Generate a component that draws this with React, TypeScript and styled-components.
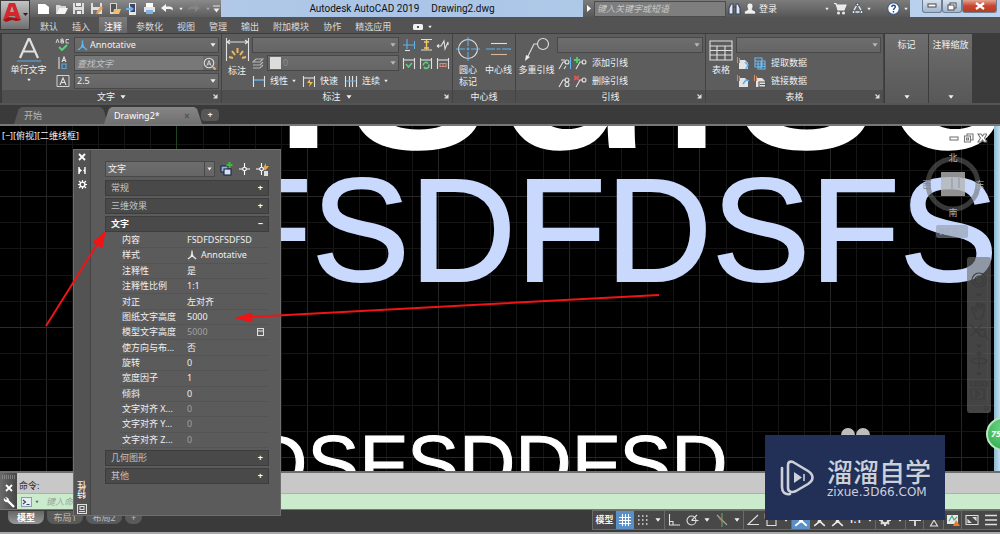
import React from "react";
import styled, { createGlobalStyle, css } from "styled-components";

const GlobalStyle = createGlobalStyle`
  * { box-sizing: border-box; }
  html, body { margin: 0; padding: 0; background: #3a3a3a; }
  body, button, input, select, table {
    font-family: "Noto Sans", "Noto Sans CJK SC", sans-serif;
    font-size: 9px;
    line-height: 12px;
    color: #f0f0f0;
  }
  button { background: none; border: 0; padding: 0; margin: 0; cursor: pointer; }
  svg { display: block; flex: none; }
`;

const Window = styled.div`
  position: relative;
  display: flex;
  flex-direction: column;
  min-height: 100vh;
  overflow: hidden;
`;

/* ---------- title bar ---------- */
const TitleBar = styled.header`
  display: flex;
  height: 17px;
  background: linear-gradient(90deg, #bcd0ea, #a9c4e6 40%, #bcd2ee);
`;
const QuickAccess = styled.div`
  display: flex;
  align-items: center;
  width: 221px;
  padding-left: 35px;
  background: linear-gradient(#8a8a8a, #5c5c5c);
`;
const QuickButton = styled.button<{ $narrow?: boolean }>`
  display: flex;
  justify-content: center;
  width: ${(p) => (p.$narrow ? 9 : 17)}px;
  margin-right: ${(p) => (p.$narrow ? 0 : 1)}px;
`;
const TitleText = styled.h1`
  flex: 1;
  display: flex;
  justify-content: center;
  gap: 12px;
  margin: 0;
  font-family: Roboto, "Noto Sans", sans-serif;
  font-size: 10px;
  font-weight: 400;
  line-height: 18px;
  color: #111;
  white-space: nowrap;
`;
const InfoCenter = styled.div`
  display: flex;
  align-items: center;
  width: 327px;
  background: linear-gradient(#7c7c7c, #575757);
`;
const SearchToggle = styled.button`
  display: flex;
  align-items: center;
  justify-content: center;
  width: 11px;
  height: 17px;
`;
const TitleSearch = styled.input`
  width: 132px;
  height: 16px;
  padding: 0 2px;
  border: 1px solid #4c4c4c;
  background: #7e7e7e;
  font-style: italic;
  &::placeholder { color: #c9c9c9; }
`;
const InfoButton = styled.button<{ $wide?: boolean; $apart?: boolean }>`
  display: flex;
  align-items: center;
  justify-content: center;
  gap: 3px;
  padding: 0 ${(p) => (p.$wide ? 2 : 1)}px;
  margin-left: ${(p) => (p.$apart ? 12 : 0)}px;
`;
const Spacer = styled.div`
  flex: 1;
`;
const WindowButtons = styled.div`
  display: flex;
  width: 90px;
  padding: 0 3px 0 12px;
  align-items: flex-start;
`;
const WindowButton = styled.button<{ $close?: boolean }>`
  display: flex;
  align-items: center;
  justify-content: center;
  flex: ${(p) => (p.$close ? "0 0 35px" : "1")};
  height: 13px;
  border: 1px solid #6d7d92;
  border-top: 0;
  border-radius: 0 0 3px 3px;
  background: ${(p) =>
    p.$close ? "linear-gradient(#e3a492, #c7452e 50%, #b93c22)" : "linear-gradient(#d5e0ee, #a3b7cf)"};
`;

/* ---------- ribbon ---------- */
const AppMenu = styled.button`
  position: absolute;
  left: 0;
  top: 0;
  width: 30px;
  height: 30px;
  border: 1px solid #3c3c3c;
  background: linear-gradient(#c4c4c4, #6e6e6e);
`;
const RibbonTabs = styled.nav`
  display: flex;
  height: 16px;
  padding-left: 33px;
  background: #535353;
`;
const RibbonTab = styled.button<{ $active?: boolean; $apart?: boolean }>`
  padding: 3px 7px 0;
  margin-left: ${(p) => (p.$apart ? 8 : 0)}px;
  white-space: nowrap;
  color: ${(p) => (p.$active ? "#fff" : "#dadada")};
  ${(p) => p.$active && css`
    background: linear-gradient(#7b7b7b, #676767);
    padding: 3px 5px 0;
    margin: 0 2px;
  `}
  display: flex;
  align-items: center;
  gap: 5px;
`;
const Ribbon = styled.section`
  display: flex;
  height: 70px;
  padding-left: 2px;
  border-top: 1px solid #3d3d3d;
  background: #3c3c3c;
`;
const Panel = styled.section<{ $w: number }>`
  display: flex;
  flex-direction: column;
  width: ${(p) => p.$w}px;
  border-right: 1px solid #434343;
  background: #5d5d5d;
`;
const PanelBody = styled.div`
  display: flex;
  flex: 1;
  padding-top: 3px;
`;
const PanelFooter = styled.footer`
  position: relative;
  display: flex;
  justify-content: center;
  align-items: center;
  gap: 5px;
  height: 13px;
  background: #4f4f4f;
`;
const Launcher = styled.button`
  position: absolute;
  right: 3px;
  top: 4px;
`;
const BigButton = styled.button<{ $w: number }>`
  display: flex;
  flex-direction: column;
  align-items: center;
  gap: 2px;
  width: ${(p) => p.$w}px;
  white-space: nowrap;
`;
const PanelRows = styled.div`
  flex: 1;
  display: grid;
  grid-template-rows: repeat(3, 16px);
  row-gap: 2px;
  padding-right: 2px;
`;
const Row = styled.div<{ $gap?: number }>`
  display: flex;
  align-items: center;
  gap: ${(p) => p.$gap ?? 3}px;
  min-width: 0;
`;
const ToolButton = styled.button`
  display: flex;
  align-items: center;
  gap: 4px;
  white-space: nowrap;
`;
const ComboBox = styled.label`
  position: relative;
  display: flex;
  align-items: center;
  flex: 1;
  min-width: 0;
  height: 16px;
  border: 1px solid #484848;
  background: linear-gradient(#6d6d6d, #656565);
`;
const ComboIcon = styled.span`
  padding-left: 2px;
`;
const ComboSelect = styled.select<{ $dim?: boolean }>`
  flex: 1;
  min-width: 0;
  height: 14px;
  padding: 0 2px;
  border: 0;
  background: none;
  appearance: none;
  outline: none;
  color: ${(p) => (p.$dim ? "#8a8a8a" : "#f0f0f0")};
`;
const FindInput = styled.input`
  flex: 1;
  min-width: 0;
  height: 14px;
  padding: 0 2px;
  border: 0;
  background: #787878;
  font-style: italic;
  &::placeholder { color: #c2c2c2; }
`;
const ComboArrow = styled.span<{ $split?: boolean }>`
  display: flex;
  align-items: center;
  padding-right: 2px;
  ${(p) => p.$split && css`
    align-self: stretch;
    padding: 0 2px;
    border-left: 1px solid #484848;
  `}
`;
const CollapsedPanel = styled.button`
  display: flex;
  flex-direction: column;
  align-items: center;
  justify-content: space-between;
  width: 43px;
  margin-left: 1px;
  padding: 5px 0 4px;
  background: linear-gradient(#6e6e6e, #606060 60%, #585858);
  white-space: nowrap;
`;

/* ---------- document tabs ---------- */
const DocTabs = styled.nav`
  display: flex;
  align-items: flex-end;
  height: 23px;
  padding-left: 14px;
  border-top: 2px solid #555;
  border-bottom: 2px solid #777;
  background: #3a3a3a;
`;
const DocTab = styled.button<{ $active?: boolean }>`
  display: flex;
  align-items: center;
  justify-content: space-between;
  width: ${(p) => (p.$active ? 98 : 94)}px;
  height: 17px;
  margin-right: -4px;
  padding: 0 12px 0 10px;
  clip-path: polygon(0 100%, 5% 12%, 8% 0, 92% 0, 95% 12%, 100% 100%);
  background: ${(p) => (p.$active ? "linear-gradient(#858585, #707070)" : "#565656")};
  color: ${(p) => (p.$active ? "#fff" : "#b5b5b5")};
`;
const NewTab = styled.button`
  width: 18px;
  height: 12px;
  margin: 0 0 3px 3px;
  border-radius: 4px;
  background: #575757;
  line-height: 10px;
  font-weight: 700;
`;

/* ---------- drawing area ---------- */
const Canvas = styled.main`
  position: relative;
  flex: 1;
  min-height: 345px;
  overflow: hidden;
  background: #000;
`;
const Drawing = styled.svg`
  position: absolute;
  inset: 0;
  width: 100%;
  height: 100%;
`;
const DrawingText = styled.text`
  font-family: "Liberation Sans", Arial, sans-serif;
`;
const ViewLabel = styled.div`
  position: absolute;
  left: 2px;
  top: 4px;
`;
const RightEdge = styled.div`
  position: absolute;
  right: 0;
  top: 0;
  bottom: 0;
  width: 6px;
  background: linear-gradient(90deg, #8fb9cf, #bfe2f5);
`;
const DocButtons = styled.div`
  position: absolute;
  right: 13px;
  top: 7px;
`;
const ViewCube = styled.div`
  position: absolute;
  right: 15px;
  top: 24px;
`;
const NavBar = styled.div`
  position: absolute;
  right: 9px;
  top: 131px;
  display: flex;
  flex-direction: column;
  width: 24px;
  height: 156px;
  border-radius: 3px;
  background: rgba(110, 110, 110, 0.62);
`;

/* ---------- properties palette ---------- */
const Palette = styled.aside`
  position: absolute;
  left: 73px;
  top: 149px;
  display: flex;
  width: 208px;
  height: 367px;
  border: 1px solid #6e6e6e;
  background: #5b5b5b;
`;
const PaletteStrip = styled.div`
  display: flex;
  flex-direction: column;
  align-items: center;
  gap: 5px;
  width: 17px;
  padding: 3px 0 1px;
  border-right: 1px solid #444;
  background: #535353;
`;
const PaletteTitle = styled.h2`
  margin: 0;
  writing-mode: vertical-rl;
  transform: rotate(180deg);
  font-size: 9px;
  font-weight: 500;
  line-height: 12px;
`;
const PaletteBody = styled.div`
  flex: 1;
  padding: 10px 11px 0 14px;
`;
const PaletteTop = styled.div`
  display: flex;
  align-items: center;
  gap: 5px;
  height: 17px;
  margin-bottom: 3px;
`;
const SectionHead = styled.button<{ $open?: boolean }>`
  display: flex;
  align-items: center;
  justify-content: space-between;
  width: 100%;
  height: 16px;
  margin-bottom: ${(p) => (p.$open ? 0 : 2)}px;
  padding: 0 5px;
  border: 1px solid #3d3d3d;
  background: #494949;
  color: ${(p) => (p.$open ? "#fff" : "#c4c4c4")};
  font-weight: ${(p) => (p.$open ? 700 : 400)};
`;
const Sign = styled.span`
  color: #fff;
  font-weight: 700;
`;
const PropTable = styled.table`
  width: 149px;
  height: 215px;
  margin: 1px 0 2px 15px;
  border-collapse: collapse;
  table-layout: fixed;
`;
const PropName = styled.th`
  width: 65px;
  padding: 0 0 0 2px;
  border-bottom: 1px solid #545454;
  text-align: left;
  font-weight: 400;
  white-space: nowrap;
`;
const PropValue = styled.td<{ $dim?: boolean }>`
  padding: 0 5px 0 2px;
  border-bottom: 1px solid #545454;
  color: ${(p) => (p.$dim ? "#a0a0a0" : "#f0f0f0")};
  white-space: nowrap;
`;
const ValueLine = styled.span`
  display: flex;
  align-items: center;
  gap: 4px;
  & > svg:last-child:not(:first-child) { margin-left: auto; }
`;

/* ---------- command line ---------- */
const CommandBar = styled.section`
  display: flex;
  height: 39px;
  border-top: 2px solid #6d6d6d;
  border-bottom: 1px solid #777;
`;
const CommandHandle = styled.div`
  display: flex;
  flex-direction: column;
  align-items: center;
  justify-content: space-between;
  width: 17px;
  padding: 2px 0 1px;
  background: linear-gradient(90deg, #6a6a6a, #454545);
`;
const CommandLines = styled.div`
  flex: 1;
  display: flex;
  flex-direction: column;
`;
const CommandHistory = styled.div`
  height: 21px;
  padding: 7px 2px 0;
  border-bottom: 1px solid #a8b5a9;
  background: #c8c8c8;
  color: #222;
`;
const CommandPrompt = styled.label`
  display: flex;
  align-items: center;
  gap: 3px;
  flex: 1;
  padding-left: 4px;
  background: #cbebcd;
`;
const CommandInput = styled.input`
  flex: 1;
  border: 0;
  padding: 0 4px;
  background: none;
  outline: none;
  font-style: italic;
  color: #333;
  &::placeholder { color: #96a898; }
`;

/* ---------- status bar ---------- */
const StatusBar = styled.footer`
  display: flex;
  justify-content: space-between;
  height: 24px;
  border-bottom: 2px solid #a9a9ad;
  background: #3a3a3a;
`;
const LayoutTabs = styled.div`
  display: flex;
  align-items: flex-start;
  gap: 3px;
  padding: 1px 0 0 8px;
`;
const LayoutTab = styled.button<{ $active?: boolean; $small?: boolean }>`
  width: ${(p) => (p.$small ? 17 : 36)}px;
  height: 13px;
  border-radius: 0 0 7px 7px;
  background: ${(p) => (p.$active ? "linear-gradient(#666, #999)" : "#5a5a5a")};
  color: ${(p) => (p.$active ? "#fff" : "#bdbdbd")};
  font-weight: ${(p) => (p.$active ? 700 : 400)};
`;
const StatusTools = styled.div`
  display: flex;
  height: 20px;
  border: 1px solid #6a6a6a;
  border-right: 0;
  background: #484848;
`;
const StatusButton = styled.button<{ $w?: number; $on?: boolean; $sep?: boolean }>`
  display: flex;
  align-items: center;
  justify-content: center;
  width: ${(p) => p.$w ?? 18}px;
  font-weight: 700;
  background: ${(p) => (p.$on ? "#5b8fc7" : "none")};
  border-right: ${(p) => (p.$sep ? "1px solid #6a6a6a" : "0")};
`;

/* ---------- overlays ---------- */
const Arrows = styled.svg`
  position: absolute;
  left: 0;
  top: 0;
  pointer-events: none;
`;
const Watermark = styled.div`
  position: absolute;
  right: 55px;
  bottom: 14px;
  display: flex;
  align-items: center;
  gap: 12px;
  width: 180px;
  height: 85px;
  padding-left: 14px;
  background: #222f57;
  color: #ccd0d8;
`;
const BrandName = styled.div`
  font-size: 26px;
  font-weight: 500;
  line-height: 28px;
`;
const BrandUrl = styled.div`
  font-family: "DejaVu Sans", sans-serif;
  font-size: 12px;
  line-height: 12px;
`;
const Ball = styled.div`
  position: absolute;
  right: -20px;
  bottom: 83px;
  width: 34px;
  height: 34px;
  padding-left: 3px;
  border: 2px solid #b8e6c0;
  border-radius: 50%;
  background: radial-gradient(circle at 50% 30%, #6fd684, #2ba84a);
  color: #fff;
  font-size: 9px;
  font-style: italic;
  font-weight: 700;
  line-height: 30px;
`;

type IconProps = { w?: number; h?: number; box?: string; children: React.ReactNode };
const Icon = ({ w = 14, h = 14, box, children }: IconProps) => (
  <svg width={w} height={h} viewBox={box ?? `0 0 ${w} ${h}`} fill="none" stroke="#e0e0e0" strokeWidth="1.1" aria-hidden="true">
    {children}
  </svg>
);
const Caret = ({ c = "#f0f0f0", w = 7 }: { c?: string; w?: number }) => (
  <svg width={w} height="4" viewBox="0 0 7 4" aria-hidden="true"><path d="M0.5 0h6L3.5 4z" fill={c} /></svg>
);
const Corner = () => (
  <Launcher aria-label="对话框启动器">
    <Icon w={5} h={5}><path d="M0.500 0.500l2 2" /><path d="M4.500 0v4.500H0z" fill="#e0e0e0" stroke="none" /></Icon>
  </Launcher>
);
const Person = ({ c = "#e8e8e8", s = 11 }: { c?: string; s?: number }) => (
  <Icon w={s} h={s} box="0 0 11 11"><path d="M5.500 0.500v6L1 10M5.500 6l4.500 4" stroke={c} strokeWidth="1.400" /><path d="M5.500 2L3.500 7.500h4z" fill={c} stroke="none" /></Icon>
);

type ComboProps = { label: string; value?: string; icon?: React.ReactNode; dim?: boolean; split?: boolean };
const Combo = ({ label, value, icon, dim, split }: ComboProps) => (
  <ComboBox>
    {icon && <ComboIcon>{icon}</ComboIcon>}
    <ComboSelect aria-label={label} $dim={dim}>
      <option>{value ?? ""}</option>
    </ComboSelect>
    <ComboArrow $split={split}><Caret c={dim || !value ? "#b8b8b8" : "#f0f0f0"} w={split ? 5 : 6} /></ComboArrow>
  </ComboBox>
);

const quickIcons: [string, React.ReactNode][] = [
  ["新建", <path key="a" d="M1 2h7l4 3v7H1z" fill="#fff" stroke="none" />],
  ["打开", <g key="a" stroke="none"><path d="M1 3h4l1 1h5v2H4l-3 6z" fill="#d8d8d8" /><path d="M4 6h9l-3 6H1z" fill="#f4f4f4" /></g>],
  ["保存", <g key="a" stroke="none"><path d="M1 1h11v11H1z" fill="#dedede" /><path d="M3 1h7v4H3zM3 8h7v4H3z" fill="#777" /><path d="M4 1h5v3H4zM5 9h4v3H5z" fill="#eee" /></g>],
  ["另存为", <g key="a" stroke="none"><path d="M1 1h11v11H1z" fill="#dedede" /><path d="M3 1h7v4H3zM3 8h5v4H3z" fill="#777" /><path d="M6 12l1-3 4-5 2 2-4 5z" fill="#e8a15a" /></g>],
  ["从移动设备打开", <g key="a" stroke="none"><path d="M2 1h7v11H2z" fill="#d6d6d6" /><path d="M3 2h5v8H3z" fill="#555" /><path d="M6 7h7l-2 5H5z" fill="#f0c070" /></g>],
  ["保存到移动设备", <g key="a" stroke="none"><path d="M4 1h7v12H4z" fill="#e6e6e6" /><path d="M5 2h5v8H5z" fill="#446" /><path d="M1 6h4V4l4 3-4 3V8H1z" fill="#6ab4ee" /></g>],
  ["打印", <g key="a" stroke="none"><path d="M3 1h7v4H3z" fill="#fff" /><path d="M1 5h11v5H1z" fill="#e4e4e4" /><path d="M3 8h7v4H3z" fill="#7fb2e0" /></g>],
  ["放弃", <path key="a" d="M0 6l5-4v2.500h3c3 0 4 1.500 4 4-1-1-2-1.500-4-1.500H5v3z" fill="#f4f4f4" stroke="none" />],
];

const ribbonTabs = ["默认", "插入", "注释", "参数化", "视图", "管理", "输出", "附加模块", "协作", "精选应用"];

const properties: [string, string, string?][] = [
  ["内容", "FSDFDSFSDFSD"],
  ["样式", "Annotative", "style"],
  ["注释性", "是"],
  ["注释性比例", "1:1"],
  ["对正", "左对齐"],
  ["图纸文字高度", "5000"],
  ["模型文字高度", "5000", "calc"],
  ["使方向与布...", "否"],
  ["旋转", "0"],
  ["宽度因子", "1"],
  ["倾斜", "0"],
  ["文字对齐 X...", "0", "dim"],
  ["文字对齐 Y...", "0", "dim"],
  ["文字对齐 Z...", "0", "dim"],
];

const gridX = Array.from({ length: 100 }, (_, i) => Math.round(19.5 + 26.15 * i));
const gridY = Array.from({ length: 60 }, (_, i) => Math.round(18 + 26.1 * i));

const DimIcon = () => (
  <Icon w={25} h={26}>
    <path d="M1.500 1v23M23.500 1v23M2 5h21M5 3L2 5l3 2M20 3l3 2-3 2" />
    <g stroke="#f0b75c" strokeWidth="2"><path d="M12.500 11v5M7 14l3 4M18 14l-3 4M4 20l4 1M21 20l-4 1" /></g>
  </Icon>
);
const SmallDim = ({ kind }: { kind: string }) => (
  <Icon w={14} h={13}>
    <path d="M1.500 1v11M12.500 1v11" />
    {kind === "linear" && <path d="M2 5h10" stroke="#5fb1ea" strokeWidth="1.500" />}
    {kind === "quick" && <><path d="M2 3h10" /><path d="M8 4L5 8h3l-1 4 4-5H8z" fill="#f2c14e" stroke="none" /></>}
    {kind === "cont" && <><path d="M5.500 1v11M8.500 1v11" /><path d="M2 6h10" stroke="#5fb1ea" /></>}
    {kind === "ok" && <><path d="M2 3h10" /><path d="M4 7l2.500 3L10 6" stroke="#5ccf7a" strokeWidth="1.500" /></>}
    {kind === "sync" && <><path d="M2 3h10" /><path d="M4.500 8.500a2.500 2.500 0 014.500-2M9.500 7.500a2.500 2.500 0 01-4.500 2.500" stroke="#5ccf7a" strokeWidth="1.600" /></>}
    {kind === "tol" && <><path d="M2 3h10" /><path d="M4 6.500h6v3H4zM7 6.500v3" stroke="#d88a7a" /></>}
  </Icon>
);
const LeaderIcon = ({ kind }: { kind: string }) => (
  <Icon w={14} h={13}>
    <path d="M2 12l4-7h3" /><circle cx="10" cy="5" r="2" />
    {kind === "align" && <><path d="M13.500 0v12" stroke="#5fb1ea" /><path d="M4 3h4M7 12l2-3" /></>}
    {kind === "collect" && <circle cx="10" cy="9.500" r="2" />}
    {kind === "add" && <path d="M3 0v6M0 3h6" stroke="#4ed06c" strokeWidth="1.800" />}
    {kind === "del" && <path d="M0 1l5 4M5 1L0 5" stroke="#e0584c" strokeWidth="1.800" />}
  </Icon>
);
const DataIcon = ({ kind }: { kind: string }) => (
  <Icon w={14} h={13}>
    {kind === "extract" ? (
      <path d="M2 1h7v9H2zM5 4h7v8H5zM5 7h7M5 9.500h7M8 4v8M2 4h3M2 7h3" stroke="#6fb8ea" />
    ) : (
      <><path d="M3 3h6l3 3v6H3z" fill="#e4e4e4" stroke="none" /><path d="M1.500 0v6M3.500 1v5" stroke="#d08a64" />
        {kind === "down" && <path d="M9 5l3 3-2 4" stroke="#5fb1ea" strokeWidth="1.600" />}
        {kind === "up" && <path d="M7 9l3-4 3 1" stroke="#5fb1ea" strokeWidth="1.600" />}
        {kind === "link" && <path d="M6 7h7v5H6zM7 9.500h5" stroke="#555" />}</>
    )}
  </Icon>
);

const StatusIcons = () => (
  <StatusTools>
    <StatusButton $w={23}>模型</StatusButton>
    <StatusButton $on aria-label="栅格"><Icon><path d="M4.500 1v12M7.500 1v12M10.500 1v12M1 4.500h12M1 7.500h12M1 10.500h12" stroke="#fff" /></Icon></StatusButton>
    <StatusButton aria-label="捕捉"><Icon><path d="M2 3h10M2 7h10M2 11h10" strokeDasharray="1.500 2.500" strokeWidth="1.500" /></Icon></StatusButton>
    <StatusButton $w={13} $sep aria-label="捕捉选项"><Caret w={6} /></StatusButton>
    <StatusButton aria-label="正交"><Icon><path d="M2.500 1v11H13M2.500 8.500h3.500V12" /></Icon></StatusButton>
    <StatusButton aria-label="极轴"><Icon><circle cx="6.500" cy="7.500" r="4.500" /><path d="M6.500 7.500h7M6.500 7.500L12 2" /></Icon></StatusButton>
    <StatusButton $w={12} aria-label="极轴选项"><Caret w={6} /></StatusButton>
    <StatusButton aria-label="等轴测"><Icon><path d="M2 2l10 10" stroke="#aaa" /><path d="M7 0v14" stroke="#5aae5a" /><path d="M4 5l4 4" stroke="#c86a5a" /></Icon></StatusButton>
    <StatusButton $w={13} $sep aria-label="等轴测选项"><Caret w={6} /></StatusButton>
    <StatusButton aria-label="对象捕捉追踪"><Icon><path d="M12 2L2 11.500h11" /></Icon></StatusButton>
    <StatusButton aria-label="二维对象捕捉"><Icon><path d="M3 3.500h9v9H3z" /><path d="M1 1h4v4H1z" stroke="#dd8a70" /></Icon></StatusButton>
    <StatusButton $w={12} $sep aria-label="捕捉设置"><Caret w={6} /></StatusButton>
    <StatusButton $on aria-label="注释可见性"><Person c="#fff" s={14} /></StatusButton>
    <StatusButton aria-label="自动缩放"><Person s={13} /></StatusButton>
    <StatusButton aria-label="注释比例"><Person s={13} /></StatusButton>
    <StatusButton>1:1</StatusButton>
    <StatusButton $w={12} $sep aria-label="比例选项"><Caret w={6} /></StatusButton>
    <StatusButton aria-label="切换工作空间"><Icon><circle cx="7" cy="7" r="3.500" strokeWidth="2.400" /><path d="M7 1v2M7 11v2M1 7h2M11 7h2M3 3l1 1M10 10l1 1M11 3l-1 1M4 10l-1 1" strokeWidth="2" /></Icon></StatusButton>
    <StatusButton $w={12} $sep aria-label="工作空间选项"><Caret w={6} /></StatusButton>
    <StatusButton $sep aria-label="注释监视器"><Icon><path d="M7 1v12M1 7h12" strokeWidth="1.800" /></Icon></StatusButton>
    <StatusButton $w={20} $sep aria-label="隔离对象"><Icon><path d="M7 7l3.500 6h-7z" /><circle cx="11" cy="4" r="2" /><path d="M2 3h4v3H2z" /></Icon></StatusButton>
    <StatusButton $sep aria-label="硬件加速"><Icon><path d="M1 2h11v9H1z" fill="#e8e8e8" stroke="none" /><path d="M3 8l3-5 2 4 3-3" stroke="#4a7" /><path d="M7 13l3-6 4 6z" fill="#ee7a2a" stroke="none" /></Icon></StatusButton>
    <StatusButton $w={20} aria-label="全屏显示"><Icon><path d="M1 2.500h12v9H1zM3 9.500V7l2.500 2.500zM8.500 4.500H11V7z" /></Icon></StatusButton>
    <StatusButton aria-label="自定义"><Icon><path d="M1 2.500h12M1 7h12M1 11.500h12" strokeWidth="1.600" /></Icon></StatusButton>
  </StatusTools>
);

export default function App() {
  return (
    <Window>
      <GlobalStyle />
      <TitleBar>
        <QuickAccess>
          {quickIcons.map(([name, art]) => (
            <QuickButton key={name} aria-label={name}><Icon w={13} h={13}>{art}</Icon></QuickButton>
          ))}
          <QuickButton $narrow aria-label="放弃列表"><Caret w={4} /></QuickButton>
          <QuickButton aria-label="重做"><Icon w={13} h={13}><path d="M13 6L8 2v2.500H5c-3 0-4 1.500-4 4 1-1 2-1.500 4-1.500h3v3z" fill="#858585" stroke="none" /></Icon></QuickButton>
          <QuickButton $narrow aria-label="重做列表"><Caret w={4} c="#aaa" /></QuickButton>
          <QuickButton $narrow aria-label="自定义快速访问工具栏"><Icon w={7} h={8}><path d="M0 1h7" /><path d="M0.500 3.500h6l-3 4z" fill="#eee" stroke="none" /></Icon></QuickButton>
        </QuickAccess>
        <TitleText><span>Autodesk AutoCAD 2019</span><span>Drawing2.dwg</span></TitleText>
        <InfoCenter>
          <SearchToggle aria-label="展开搜索"><Icon w={4} h={7}><path d="M0 0l4 3.500L0 7z" fill="#fff" stroke="none" /></Icon></SearchToggle>
          <TitleSearch aria-label="搜索" placeholder="键入关键字或短语" />
          <InfoButton $wide aria-label="查找"><Icon w={13} h={13}><path d="M1 12V6l2-4h2v10zM12 12V6l-2-4H8v10zM5 5h3" fill="#e6e6e6" stroke="#33466a" /></Icon></InfoButton>
          <InfoButton><Icon w={12} h={13}><path d="M6 1a3 3 0 013 3c0 1.500-.8 2.500-1 3.500l3.500 2V12h-11V9.500l3.500-2C3.800 6.500 3 5.500 3 4a3 3 0 013-3z" fill="#f0f0f0" stroke="#555" strokeWidth="0.600" /></Icon>登录</InfoButton>
          <Spacer />
          <InfoButton $wide aria-label="登录选项"><Caret w={4} /></InfoButton>
          <InfoButton $wide $apart={false} aria-label="应用商店"><Icon w={14} h={13}><path d="M1 1.500h2l2 6.500h6l2-5H4" fill="#e8e8e8" stroke="#f0f0f0" /><circle cx="5.500" cy="11" r="1" fill="#fff" /><circle cx="10.500" cy="11" r="1" fill="#fff" /></Icon></InfoButton>
          <InfoButton $wide aria-label="保持连接"><Icon w={13} h={13}><path d="M6.500 2L11 10H2z" stroke="#e8e8f4" strokeWidth="1.400" /><g fill="#fff" stroke="#456"><circle cx="6.500" cy="2.500" r="1.500" /><circle cx="2.500" cy="10" r="1.500" /><circle cx="10.500" cy="10" r="1.500" /></g></Icon><Caret w={4} /></InfoButton>
          <InfoButton $wide $apart aria-label="帮助"><Icon w={13} h={13}><circle cx="6.500" cy="6.500" r="5.800" fill="#fff" stroke="#345a9a" /><path d="M4.800 5c0-2.500 3.600-2.300 3.500-.2C8.300 6.200 6.500 6.200 6.500 8M6.500 9v1.500" stroke="#23457f" strokeWidth="1.400" /></Icon></InfoButton>
          <InfoButton $wide aria-label="帮助选项"><Caret w={4} /></InfoButton>
        </InfoCenter>
        <WindowButtons>
          <WindowButton aria-label="最小化"><Icon w={10} h={6}><rect x="1" y="1" width="8" height="3" fill="#fff" stroke="#555" /></Icon></WindowButton>
          <WindowButton aria-label="还原"><Icon w={10} h={9}><rect x="3" y="1" width="6" height="5" fill="#fff" stroke="#555" /><rect x="1" y="3" width="6" height="5" fill="#fff" stroke="#555" /></Icon></WindowButton>
          <WindowButton $close aria-label="关闭"><Icon w={10} h={8}><path d="M1 1l8 6M9 1L1 7" stroke="#fff" strokeWidth="2.200" /></Icon></WindowButton>
        </WindowButtons>
      </TitleBar>

      <RibbonTabs>
        {ribbonTabs.map((t) => <RibbonTab key={t} $active={t === "注释"}>{t}</RibbonTab>)}
        <RibbonTab $apart aria-label="功能区选项">
          <Icon w={10} h={6}><rect width="10" height="6" rx="1.500" fill="#f0f0f0" stroke="none" /><rect x="4" y="2" width="2" height="2" fill="#555" stroke="none" /></Icon>
          <Caret w={4} />
        </RibbonTab>
      </RibbonTabs>
      <AppMenu aria-label="应用程序菜单">
        <Icon w={28} h={28}>
          <path d="M2 19L8 2h6l6 17-5 1-1-5H8l-1 3z" fill="#d4262d" stroke="none" />
          <path d="M9 11l2-6 2 6z" fill="#a9a9a9" stroke="none" />
          <path d="M2 19l6-3 7 1 5 2-5 1-4-1-6 2z" fill="#a31218" stroke="none" />
          <path d="M22 12h5l-2.500 3z" fill="#222" stroke="none" />
        </Icon>
      </AppMenu>

      <Ribbon>
        <Panel $w={220}>
          <PanelBody>
            <BigButton $w={53}>
              <Icon w={24} h={25}><path d="M3 21L11.500 2h1L21 21M6 14.500h12" strokeWidth="2.200" /><path d="M0 24h24" stroke="#5fa5dc" /></Icon>
              <span>单行文字</span><Caret w={4} />
            </BigButton>
            <PanelRows>
              <Row>
                <ToolButton aria-label="拼写检查"><Icon w={16}><path d="M1 5l1.500-4L4 5M6 1v4h2.500V3H6h2V1zM14 1.500h-3V5h3" strokeWidth="0.900" /><path d="M4 9l3 3 5-5" stroke="#5fd37c" strokeWidth="1.800" /></Icon></ToolButton>
                <Combo label="文字样式" value="Annotative" icon={<Person c="#5db4f0" />} />
              </Row>
              <Row>
                <ToolButton aria-label="文字对齐"><Icon w={16}><path d="M4 1v12" /><path d="M7 6l2-5 2 5M7.500 4.500h3" /><path d="M7 8h4v4.500H7z" stroke="#5fa5dc" /></Icon></ToolButton>
                <ComboBox>
                  <FindInput aria-label="查找文字" placeholder="查找文字" />
                  <ComboArrow><Icon w={13} h={13}><circle cx="6" cy="6" r="4.800" /><path d="M4 8.500l2-5 2 5M5 7h2" strokeWidth="0.900" /><path d="M10 10l2.500 2.500" stroke="#e6b45e" strokeWidth="2" /></Icon></ComboArrow>
                </ComboBox>
              </Row>
              <Row>
                <ToolButton aria-label="文字高度"><Icon w={16}><path d="M2 1.500h12v11H2z" strokeWidth="0.900" /><path d="M5 11l3-7 3 7M6 8.500h4" /></Icon></ToolButton>
                <Combo label="文字高度" value="2.5" />
              </Row>
            </PanelRows>
          </PanelBody>
          <PanelFooter><span>文字</span><Caret w={6} /><Corner /></PanelFooter>
        </Panel>

        <Panel $w={231}>
          <PanelBody>
            <BigButton $w={30}><DimIcon /><span>标注</span></BigButton>
            <PanelRows>
              <Row>
                <Combo label="标注样式" />
                <ToolButton aria-label="打断"><Icon><path d="M1 7h12M5 1v10M12.500 3v8" stroke="#5fb1ea" /><path d="M3 12.500h5" /></Icon></ToolButton>
                <ToolButton aria-label="调整间距"><Icon><path d="M2 1.500h11M2 12h11" /><path d="M7.500 2v9.500M5 4h5M5 10h5" stroke="#f0c86a" strokeWidth="1.400" /></Icon></ToolButton>
                <ToolButton aria-label="折弯"><Icon><path d="M1 8h4l3-5 1 8 3-7v3M1 8l2-1.500M1 8l2 1.500" /></Icon></ToolButton>
              </Row>
              <Row>
                <Icon w={12} h={13}><path d="M1 5l3-3h7L8 5zM1 8l2 0M8 8l3-3M1 8h7M1 11h7l3-3" stroke="#b8b8b8" /></Icon>
                <Combo label="标注图层" value="0" dim icon={<Icon w={11} h={12}><rect width="11" height="12" fill="#dcdcdc" stroke="none" /></Icon>} />
                <ToolButton aria-label="检验"><SmallDim kind="ok" /></ToolButton>
                <ToolButton aria-label="更新"><SmallDim kind="sync" /></ToolButton>
                <ToolButton aria-label="公差"><SmallDim kind="tol" /></ToolButton>
              </Row>
              <Row $gap={6}>
                <ToolButton><SmallDim kind="linear" />线性<Caret w={4} /></ToolButton>
                <ToolButton><SmallDim kind="quick" />快速</ToolButton>
                <ToolButton><SmallDim kind="cont" />连续<Caret w={4} /></ToolButton>
              </Row>
            </PanelRows>
          </PanelBody>
          <PanelFooter><span>标注</span><Caret w={6} /><Corner /></PanelFooter>
        </Panel>

        <Panel $w={63}>
          <PanelBody>
            <BigButton $w={30}>
              <Icon w={24} h={25}><circle cx="12" cy="12" r="9.500" /><path d="M12 0v24M0 12h24" stroke="#5fb1ea" strokeDasharray="9 1.500 3 1.500" /></Icon>
              <span>圆心<br />标记</span>
            </BigButton>
            <BigButton $w={31}>
              <Icon w={26} h={25}><path d="M5 6.500h16" /><path d="M0 12h26" stroke="#5fb1ea" strokeDasharray="9 1.500 4 1.500" /><path d="M5 17.500h16" stroke="#d6b79a" /></Icon>
              <span>中心线</span>
            </BigButton>
          </PanelBody>
          <PanelFooter>中心线</PanelFooter>
        </Panel>

        <Panel $w={190}>
          <PanelBody>
            <BigButton $w={41}>
              <Icon w={26} h={25}><circle cx="19" cy="7" r="5.500" /><path d="M13.500 7H10L3 21" /><path d="M1 24l1-6 4 2z" fill="#eee" stroke="none" /></Icon>
              <span>多重引线</span>
            </BigButton>
            <PanelRows>
              <Row><Combo label="多重引线样式" /></Row>
              <Row>
                <ToolButton aria-label="对齐"><LeaderIcon kind="align" /></ToolButton>
                <ToolButton><LeaderIcon kind="add" />添加引线</ToolButton>
              </Row>
              <Row>
                <ToolButton aria-label="合并"><LeaderIcon kind="collect" /></ToolButton>
                <ToolButton><LeaderIcon kind="del" />删除引线</ToolButton>
              </Row>
            </PanelRows>
          </PanelBody>
          <PanelFooter>引线<Corner /></PanelFooter>
        </Panel>

        <Panel $w={178}>
          <PanelBody>
            <BigButton $w={30}>
              <Icon w={24} h={25}><path d="M1 4h22v19H1zM1 9h22M1 13.500h22M1 18h22M8 9v14M16 9v14" /></Icon>
              <span>表格</span>
            </BigButton>
            <PanelRows>
              <Row><Combo label="表格样式" /></Row>
              <Row>
                <ToolButton aria-label="从源下载"><DataIcon kind="down" /></ToolButton>
                <ToolButton><DataIcon kind="extract" />提取数据</ToolButton>
              </Row>
              <Row>
                <ToolButton aria-label="上载到源"><DataIcon kind="up" /></ToolButton>
                <ToolButton><DataIcon kind="link" />链接数据</ToolButton>
              </Row>
            </PanelRows>
          </PanelBody>
          <PanelFooter>表格<Corner /></PanelFooter>
        </Panel>
        <CollapsedPanel>标记<Caret w={6} /></CollapsedPanel>
        <CollapsedPanel>注释缩放<Caret w={6} /></CollapsedPanel>
      </Ribbon>

      <DocTabs>
        <DocTab>开始</DocTab>
        <DocTab $active><span>Drawing2*</span><Icon w={6} h={6}><path d="M1 1l4 4M5 1L1 5" stroke="#555" /></Icon></DocTab>
        <NewTab aria-label="新图形">+</NewTab>
      </DocTabs>

      <Canvas>
        <Drawing aria-hidden="true">
          <g shapeRendering="crispEdges" strokeWidth="1">
            {gridX.map((x, i) => <line key={x} x1={x + 0.5} x2={x + 0.5} y1="0" y2="100%" stroke={i % 5 === 1 ? "#262626" : "#151515"} />)}
            {gridY.map((y, i) => <line key={y} x1="0" x2="100%" y1={y + 0.5} y2={y + 0.5} stroke={i % 5 === 2 ? "#262626" : "#151515"} />)}
            <line x1="0" x2="100%" y1="201.500" y2="201.500" stroke="#4d1f1c" />
            <line x1="176.500" x2="176.500" y1="0" y2="201" stroke="#1d451f" />
          </g>
          <DrawingText x="265" y="21" fontSize="291" fill="#fff" stroke="#fff" strokeWidth="2">fsdfsdfsd</DrawingText>
          <DrawingText x="222" y="155" fontSize="147" fill="#c8d9fd" stroke="#c8d9fd" strokeWidth="2">FSDFDSFS</DrawingText>
          <DrawingText x="251" y="364" fontSize="78" fill="#fff" stroke="#fff" strokeWidth="1">DSFSDDFSD</DrawingText>
          <g fill="#bdbdbd"><circle cx="848" cy="309" r="7" /><circle cx="863" cy="309" r="7" /></g>
        </Drawing>
        <ViewLabel>[−][俯视][二维线框]</ViewLabel>
        <RightEdge />
        <DocButtons>
          <Icon w={38} h={10}>
            <g stroke="#777" fill="#fff"><rect x="1" y="4" width="8" height="3" /><path d="M18 1h6v6h-6z" /><path d="M15.500 3h6v6h-6zM17.500 5h2v2h-2z" /><path d="M29 1h3l1.500 2L35 1h3l-2.500 4L38 9h-3l-1.500-2L32 9h-3l2.500-4z" /></g>
          </Icon>
        </DocButtons>
        <ViewCube>
          <svg width="64" height="88" viewBox="0 0 64 88" fontSize="9" textAnchor="middle">
            <circle cx="32" cy="34" r="25" fill="none" stroke="#666" strokeOpacity="0.550" strokeWidth="5" />
            <rect x="20" y="22" width="24" height="24" fill="#b4b4b4" fillOpacity="0.800" />
            <path d="M31 28v11M38 28v10" stroke="#8a95a5" fill="none" />
            <rect x="15" y="75" width="32" height="13" rx="2" fill="#8d94a2" fillOpacity="0.550" />
            <g fill="#b0b0b0"><text x="32" y="11">北</text><text x="59" y="38">东</text><text x="32" y="66">南</text><text x="6" y="38" fill="#888">西</text></g>
            <text x="27" y="85" fill="#a3adc0">WCS</text>
          </svg>
        </ViewCube>
        <NavBar>
          <Icon w={24} h={156}>
            <g stroke="#3c3c3c" strokeWidth="1.200">
              <circle cx="12" cy="23" r="7" /><circle cx="12" cy="23" r="4" /><path d="M10 37h4l-2 2z" fill="#333" />
              <path d="M7 56l-3-5 2-1 3 4V48l1-2 2 6V46h2v6l2-5 1 1v8l-3 6H9z" />
              <path d="M3 67l12 13M15 67L4 79" /><circle cx="15" cy="76" r="3.500" /><path d="M18 79l3 3" />
              <path d="M10 88h4l-2 2z" fill="#333" />
              <path d="M12 95v17M9 98l3-3 3 3M4 104c3-4 13-4 16 0-3 4-13 4-16 0" /><path d="M10 116h4l-2 2z" fill="#333" />
              <path d="M4 125h4v4H4zM10 125h4v4h-4zM16 125h4v4h-4zM4 132h13v10H4zM9 134v6l4-3z" /><circle cx="19" cy="151" r="2" />
            </g>
          </Icon>
        </NavBar>
      </Canvas>

      <CommandBar>
        <CommandHandle>
          <Icon w={13} h={4}><path d="M0 1h13M0 3h13" strokeDasharray="1 1" stroke="#aaa" /></Icon>
          <Icon w={8} h={8}><path d="M1 1l6 6M7 1L1 7" stroke="#fff" strokeWidth="1.800" /></Icon>
          <Icon w={12} h={12}><path d="M5 5l6 6" stroke="#fff" strokeWidth="2.400" /><path d="M2 1l2 2-1 1-2-2C0 4 2 7 5 6c2-1 1-5-3-5z" fill="#fff" stroke="none" /></Icon>
        </CommandHandle>
        <CommandLines>
          <CommandHistory>命令:</CommandHistory>
          <CommandPrompt>
            <Icon w={11} h={10}><rect x="0.500" y="0.500" width="10" height="9" fill="#e8eef6" stroke="#8b9bb5" /><path d="M2 3l2.500 2L2 7M5.500 7.500h3" stroke="#345" /></Icon>
            <Caret w={4} c="#667" />
            <CommandInput aria-label="命令行" placeholder="键入命令" />
          </CommandPrompt>
        </CommandLines>
      </CommandBar>

      <StatusBar>
        <LayoutTabs>
          <LayoutTab $active>模型</LayoutTab>
          <LayoutTab>布局1</LayoutTab>
          <LayoutTab>布局2</LayoutTab>
          <LayoutTab $small>+</LayoutTab>
        </LayoutTabs>
        <StatusIcons />
      </StatusBar>

      <Palette>
        <PaletteStrip>
          <Icon w={8} h={8}><path d="M1 1l6 6M7 1L1 7" stroke="#fff" strokeWidth="1.800" /></Icon>
          <Icon w={8} h={9}><path d="M1 1v7M7 1v7" stroke="#fff" strokeWidth="1.400" /><path d="M1 2l3 2.500L1 7zM7 3L5 4.500 7 6z" fill="#fff" stroke="none" /></Icon>
          <Icon w={9} h={9}><circle cx="4.500" cy="4.500" r="2.400" stroke="#fff" strokeWidth="1.400" /><path d="M1 1l1.500 1.500M8 1L6.500 2.500M1 8l1.500-1.500M8 8L6.500 6.500M4.500 0v2M4.500 7v2M0 4.500h2M7 4.500h2" stroke="#fff" /></Icon>
          <Spacer />
          <PaletteTitle>特性</PaletteTitle>
          <Icon w={10} h={10}><rect x="0.500" y="0.500" width="9" height="9" /><path d="M2 7.500h6M3 2.500h4v3H3z" /></Icon>
        </PaletteStrip>
        <PaletteBody>
          <PaletteTop>
            <Combo label="对象类型" value="文字" split />
            <ToolButton aria-label="切换 PICKADD"><Icon w={13}><rect x="1" y="4" width="7" height="6" fill="#8fb5e8" stroke="#223" /><rect x="4" y="7" width="7" height="6" fill="#cfe0f8" stroke="#223" /><path d="M9.500 0v6M6.500 3h6" stroke="#3dbb3d" strokeWidth="2" /></Icon></ToolButton>
            <ToolButton aria-label="选择对象"><Icon w={13}><path d="M6.500 1v4M6.500 9v4M1 7h4M8 7h4" stroke="#fff" /><circle cx="6.500" cy="7" r="1.800" stroke="#fff" /></Icon></ToolButton>
            <ToolButton aria-label="快速选择"><Icon w={13}><path d="M5.500 1v4M5.500 9v4M0 7h4M7 7h3" stroke="#fff" /><circle cx="5.500" cy="7" r="1.800" stroke="#fff" /><path d="M10 1L7 6h3l-1 3 4-5h-3z" fill="#f0a43a" stroke="none" /><rect x="8" y="9" width="4" height="5" fill="#ddd" stroke="none" /></Icon></ToolButton>
          </PaletteTop>
          <SectionHead>常规<Sign>+</Sign></SectionHead>
          <SectionHead>三维效果<Sign>+</Sign></SectionHead>
          <SectionHead $open>文字<Sign>−</Sign></SectionHead>
          <PropTable>
            <tbody>
              {properties.map(([name, value, kind]) => (
                <tr key={name}>
                  <PropName scope="row">{name}</PropName>
                  <PropValue $dim={kind === "dim" || kind === "calc"}>
                    <ValueLine>
                      {kind === "style" && <Person s={10} />}
                      <span>{value}</span>
                      {kind === "calc" && <Icon w={7} h={8}><rect x="0.500" y="0.500" width="6" height="7" /><path d="M1 3h5" /></Icon>}
                    </ValueLine>
                  </PropValue>
                </tr>
              ))}
            </tbody>
          </PropTable>
          <SectionHead>几何图形<Sign>+</Sign></SectionHead>
          <SectionHead>其他<Sign>+</Sign></SectionHead>
        </PaletteBody>
      </Palette>

      <Arrows width="700" height="400" viewBox="0 0 700 400" aria-hidden="true">
        <g stroke="#f01414" strokeWidth="2" fill="#f01414">
          <path d="M46 326L98 243M659 295L250 317" />
          <path d="M105 232l-3 16-9-6zM236 318l16-5v9z" strokeWidth="1" />
        </g>
      </Arrows>

      <Ball>75</Ball>
      <Watermark>
        <Icon w={36} h={38}>
          <g stroke="#ccd0d8" strokeWidth="2.600" strokeLinecap="round" strokeLinejoin="round">
            <path d="M9 29V6c0-3 2-4 5-3l15 9c6 4 6 9 0 13l-12 7c-4 2-8 1-8-3z" />
            <path d="M3 9v19c0 5 3 8 8 7" />
          </g>
          <path d="M15 13l8 5.500-8 5.500z" fill="#ccd0d8" stroke="none" /><path d="M25 15v7" stroke="#ccd0d8" strokeWidth="1.600" />
        </Icon>
        <div>
          <BrandName>溜溜自学</BrandName>
          <BrandUrl>zixue.3D66.COM</BrandUrl>
        </div>
      </Watermark>
    </Window>
  );
}
